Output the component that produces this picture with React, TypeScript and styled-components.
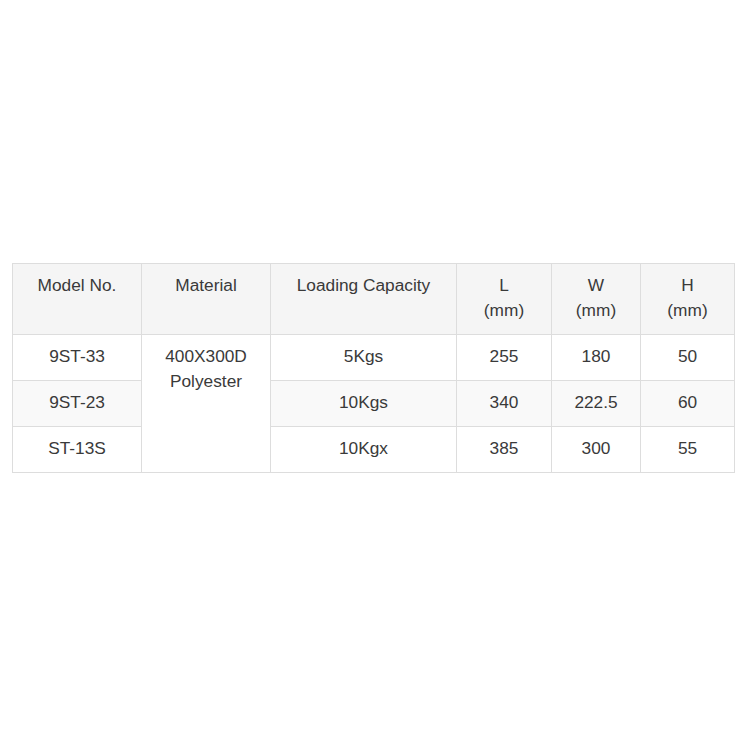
import styled, { createGlobalStyle } from 'styled-components';

const GlobalStyle = createGlobalStyle`
    html, body {
        margin: 0;
        background: #fff;
        font-family: "Liberation Sans", Arial, sans-serif;
    }
`

const rows = [
    { model: '9ST-33', capacity: '5Kgs', l: '255', w: '180', h: '50' },
    { model: '9ST-23', capacity: '10Kgs', l: '340', w: '222.5', h: '60' },
    { model: 'ST-13S', capacity: '10Kgx', l: '385', w: '300', h: '55' },
];

const widths = [129, 129, 186, 95, 89, 94];

const App = () => {
    return (
        <>
            <GlobalStyle />
            <Page>
                <SpecTable>
                    <colgroup>
                        {widths.map((w, i) => <col key={i} style={{ width: w }} />)}
                    </colgroup>
                    <thead>
                        <tr>
                            <Head>Model No.</Head>
                            <Head>Material</Head>
                            <Head>Loading Capacity</Head>
                            <Head>L<br />(mm)</Head>
                            <Head>W<br />(mm)</Head>
                            <Head>H<br />(mm)</Head>
                        </tr>
                    </thead>
                    <tbody>
                        {rows.map((r, i) => (
                            <Row key={r.model} $striped={i === 1}>
                                <Cell>{r.model}</Cell>
                                {i === 0 && (
                                    <MaterialCell rowSpan={3}>400X300D<br />Polyester</MaterialCell>
                                )}
                                <Cell>{r.capacity}</Cell>
                                <Cell>{r.l}</Cell>
                                <Cell>{r.w}</Cell>
                                <Cell>{r.h}</Cell>
                            </Row>
                        ))}
                    </tbody>
                </SpecTable>
            </Page>
        </>
    )
}

const Page = styled.div`
    padding: 263px 16px 0 12px;
`

const SpecTable = styled.table`
    width: 722px;
    table-layout: fixed;
    border-collapse: collapse;
    color: #3a3a3a;
    font-size: 17.3px;
    line-height: 25px;
`

const Head = styled.th`
    font-weight: normal;
    background: #f5f5f5;
    border: 1px solid #ddd;
    padding: 9px 6px 11px;
    height: 50px;
    vertical-align: top;
    text-align: center;
`

const Row = styled.tr<{ $striped: boolean }>`
    background: ${p => p.$striped ? '#f9f9f9' : '#fff'};
`

const Cell = styled.td`
    border: 1px solid #ddd;
    padding: 9px 6px 11px;
    vertical-align: top;
    text-align: center;
`

const MaterialCell = styled(Cell)`
    background: #fff;
`

export default App
